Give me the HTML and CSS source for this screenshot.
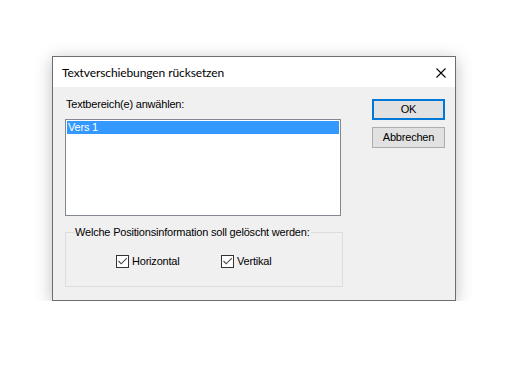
FILE: index.html
```html
<!DOCTYPE html>
<html lang="de">
<head>
<meta charset="utf-8">
<title>Textverschiebungen rücksetzen</title>
<link rel="stylesheet" href="styles.css">
</head>
<body>
<div class="stage">
  <div class="dialog">
    <div class="titlebar">
      <span class="title">Textverschiebungen rücksetzen</span>
      <svg class="close" width="10" height="10" viewBox="0 0 10 10"><path d="M0.5 0.5 L9.5 9.5 M9.5 0.5 L0.5 9.5" stroke="#000" stroke-width="1.1" fill="none"/></svg>
    </div>
    <div class="client">
      <div class="main">
        <div class="label">Textbereich(e) anwählen:</div>
        <div class="listbox">
          <div class="item selected">Vers 1</div>
        </div>
        <fieldset class="group">
          <legend>Welche Positionsinformation soll gelöscht werden:</legend>
          <div class="checks">
            <label class="check first"><span class="box"><svg width="11" height="11" viewBox="0 0 11 11"><path d="M1.5 5 L4.2 7.8 L9.8 2.2" stroke="#4a4a4a" stroke-width="1.1" fill="none"/></svg></span>Horizontal</label>
            <label class="check"><span class="box"><svg width="11" height="11" viewBox="0 0 11 11"><path d="M1.5 5 L4.2 7.8 L9.8 2.2" stroke="#4a4a4a" stroke-width="1.1" fill="none"/></svg></span>Vertikal</label>
          </div>
        </fieldset>
      </div>
      <div class="buttons">
        <div class="btn default">OK</div>
        <div class="btn">Abbrechen</div>
      </div>
    </div>
  </div>
</div>
</body>
</html>
```

FILE: styles.css
```css
html, body {
  margin: 0;
  padding: 0;
  background: #ffffff;
}
.stage {
  padding: 56px 0 0 52px;
}
.dialog {
  box-sizing: border-box;
  width: 404px;
  height: 245px;
  border: 1px solid #6e6e6e;
  background: #f0f0f0;
  box-shadow: 0 3px 16px rgba(0, 0, 0, 0.26);
  display: flex;
  flex-direction: column;
  font-family: "Liberation Sans", Arial, sans-serif;
  font-size: 11px;
  letter-spacing: -0.2px;
  color: #000;
}
.titlebar {
  height: 30px;
  background: #ffffff;
  display: flex;
  align-items: center;
  justify-content: space-between;
  padding: 0 9px 0 9px;
  flex-shrink: 0;
}
.title {
  font-family: "Lato", "Open Sans", sans-serif;
  font-size: 12px;
  letter-spacing: -0.1px;
  line-height: 16px;
  color: #000;
  padding-top: 1px;
}
.close {
  display: block;
  margin-top: 1px;
}
.client {
  flex: 1;
  display: flex;
  padding: 11px 10px 0 12px;
}
.main {
  width: 278px;
  display: flex;
  flex-direction: column;
}
.label {
  line-height: 13px;
  height: 13px;
  padding-left: 1px;
  margin-bottom: 8px;
}
.listbox {
  box-sizing: border-box;
  width: 276px;
  height: 97px;
  border: 1px solid #828790;
  background: #ffffff;
  padding: 1px;
}
.item {
  height: 13px;
  line-height: 13px;
  padding-left: 1px;
}
.item.selected {
  background: #3399ff;
  color: #ffffff;
}
.group {
  margin: 9px 0 0 0;
  padding: 0 0 18px 8px;
  border: 1px solid #dcdcdc;
  min-width: 0;
  box-sizing: border-box;
  width: 278px;
}
.group legend {
  padding: 0 1px;
  line-height: 14px;
  font-size: 11px;
}
.checks {
  display: flex;
  margin: 16px 0 0 42px;
  height: 13px;
}
.check {
  display: flex;
  align-items: center;
  gap: 3px;
  line-height: 13px;
}
.check.first {
  width: 105px;
}
.box {
  box-sizing: border-box;
  width: 13px;
  height: 13px;
  border: 1px solid #333333;
  background: #ffffff;
  display: block;
}
.box svg {
  display: block;
}
.buttons {
  margin-left: auto;
  margin-top: 1px;
  display: flex;
  flex-direction: column;
  gap: 7px;
}
.btn {
  box-sizing: border-box;
  width: 73px;
  height: 21px;
  border: 1px solid #adadad;
  background: #e1e1e1;
  display: flex;
  align-items: center;
  justify-content: center;
  line-height: 13px;
}
.btn.default {
  border: 2px solid #0078d7;
}
```
